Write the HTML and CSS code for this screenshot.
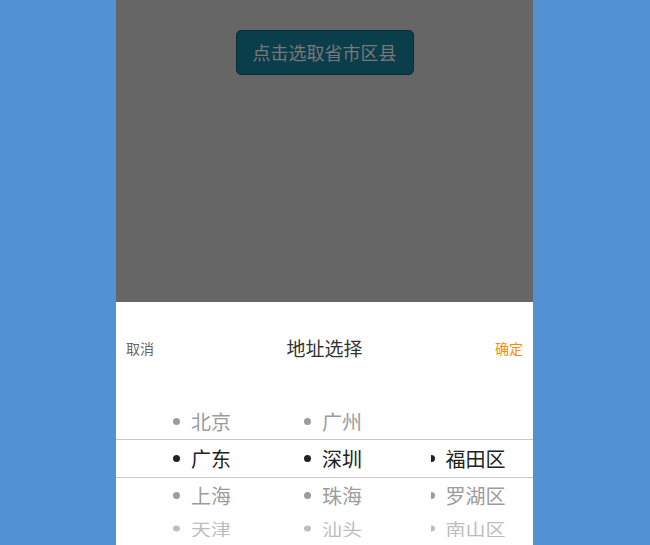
FILE: index.html
```html
<!DOCTYPE html>
<html lang="zh">
<head>
<meta charset="utf-8">
<title>地址选择</title>
<link rel="stylesheet" href="styles.css">
</head>
<body>
<div class="phone">
  <div class="mask">
    <button class="pick-btn">点击选取省市区县</button>
  </div>
  <div class="sheet">
    <div class="sheet-head">
      <span class="cancel">取消</span>
      <span class="title">地址选择</span>
      <span class="ok">确定</span>
    </div>
    <div class="picker">
      <div class="band"></div>
      <div class="col col1">
        <div class="row near"><i class="dot"></i>北京</div>
        <div class="row sel"><i class="dot"></i>广东</div>
        <div class="row near"><i class="dot"></i>上海</div>
        <div class="row far"><i class="dot"></i>天津</div>
      </div>
      <div class="col col2">
        <div class="row near"><i class="dot"></i>广州</div>
        <div class="row sel"><i class="dot"></i>深圳</div>
        <div class="row near"><i class="dot"></i>珠海</div>
        <div class="row far"><i class="dot"></i>汕头</div>
      </div>
      <div class="col col3">
        <div class="row blank"></div>
        <div class="row sel"><i class="dot"></i>福田区</div>
        <div class="row near"><i class="dot"></i>罗湖区</div>
        <div class="row far"><i class="dot"></i>南山区</div>
      </div>
    </div>
  </div>
</div>
</body>
</html>
```
FILE: styles.css
```css
html, body {
  margin: 0;
  padding: 0;
}
body {
  background: #5292d2;
  font-family: "Noto Sans CJK SC", "Noto Sans", sans-serif;
}
.phone {
  width: 417px;
  height: 545px;
  margin-left: 116px;
  display: flex;
  flex-direction: column;
  overflow: hidden;
}
.mask {
  height: 302px;
  flex: none;
  background: #666666;
  display: flex;
  justify-content: center;
  align-items: flex-start;
  padding-top: 30px;
  box-sizing: border-box;
}
.pick-btn {
  width: 178px;
  height: 45px;
  background: #0b3e4b;
  border: 1px solid #082f39;
  border-radius: 5px;
  color: #787878;
  font-family: "Noto Sans CJK SC", sans-serif;
  font-size: 18px;
  padding: 0;
  line-height: 43px;
}
.sheet {
  flex: 1;
  background: #ffffff;
  display: flex;
  flex-direction: column;
}
.sheet-head {
  height: 91px;
  flex: none;
  display: flex;
  align-items: center;
  justify-content: space-between;
  padding: 0 10px;
  position: relative;
}
.cancel {
  font-size: 14px;
  color: #666666;
}
.ok {
  font-size: 14px;
  color: #ff8a00;
}
.title {
  font-size: 19px;
  color: #333333;
  position: absolute;
  left: 0;
  right: 0;
  text-align: center;
  pointer-events: none;
}
.picker {
  margin-top: 10px;
  height: 134px;
  flex: none;
  display: flex;
  position: relative;
  overflow: hidden;
}
.band {
  position: absolute;
  left: 0;
  right: 0;
  top: 36px;
  height: 37px;
  border-top: 1px solid #c8c8c8;
  border-bottom: 1px solid #c8c8c8;
  pointer-events: none;
}
.col {
  display: flex;
  flex-direction: column;
  overflow: hidden;
}
.col1 {
  width: 132px;
  padding-left: 57px;
  box-sizing: border-box;
}
.col2 {
  width: 183px;
  padding-left: 56px;
  box-sizing: border-box;
}
.col3 {
  flex: 1;
}
.row {
  height: 37px;
  flex: none;
  box-sizing: border-box;
  display: flex;
  align-items: center;
  font-size: 20px;
  white-space: nowrap;
}
.col3 .row .dot {
  margin-left: -3.5px;
}
.dot {
  width: 7px;
  height: 7px;
  border-radius: 50%;
  background: currentColor;
  margin-right: 11px;
  flex: none;
}
.sel {
  color: #222222;
}
.near {
  color: #9c9c9c;
}
.far {
  color: #bdbdbd;
  transform: translateY(-4px) scaleY(0.85);
  transform-origin: center;
}
```
